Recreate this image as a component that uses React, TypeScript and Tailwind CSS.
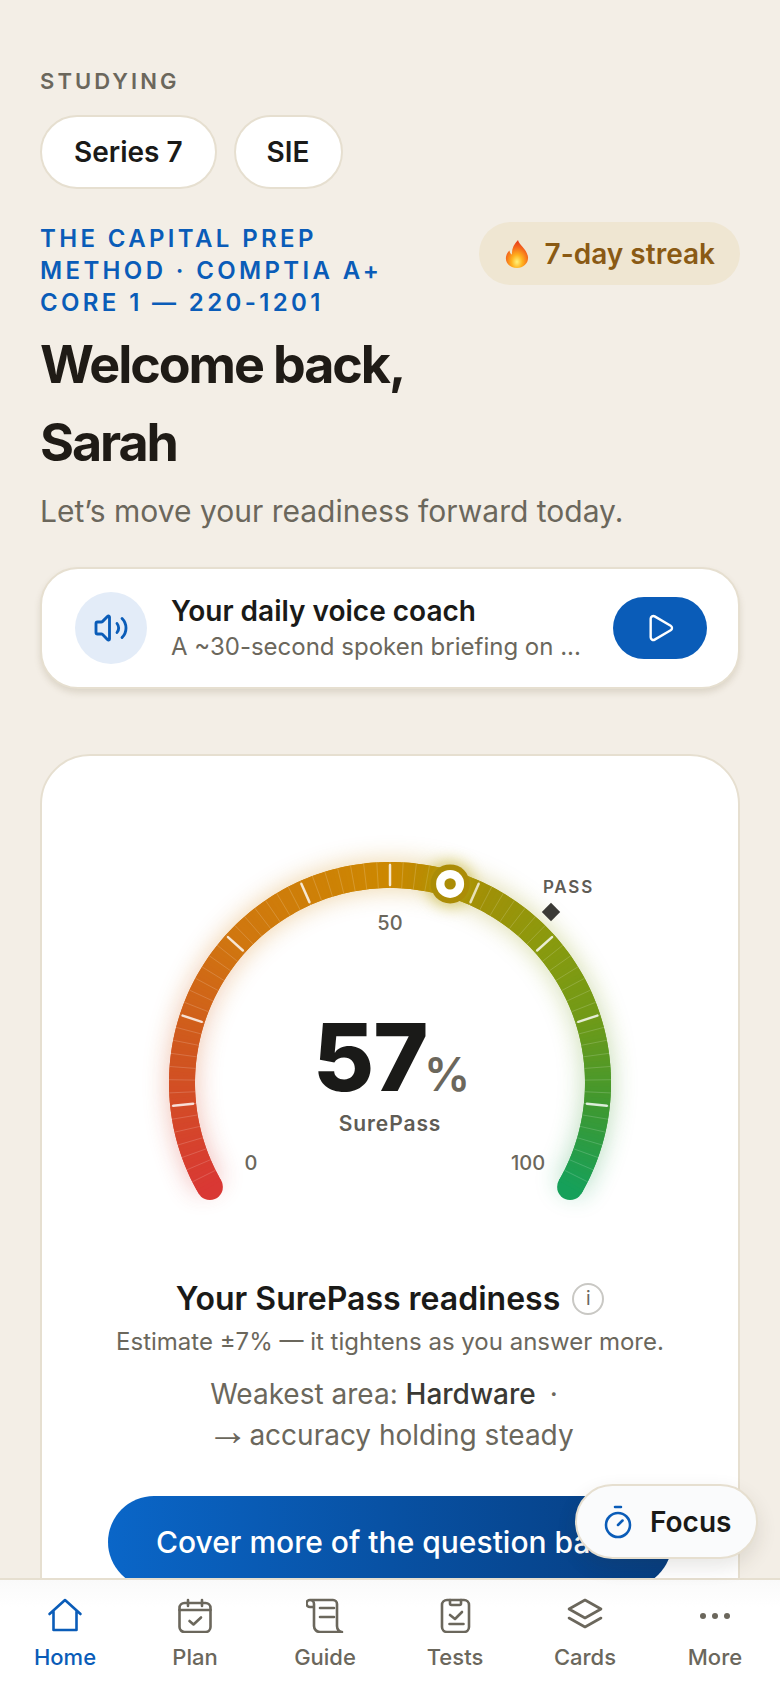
import React from "react";
import { Volume2, Play, Timer } from "lucide-react";

const cx = 390;
const cy = 1084 - 860;
const R = 208;

function pt(deg: number, r: number) {
  const a = (deg * Math.PI) / 180;
  return [cx + r * Math.sin(a), cy - r * Math.cos(a)];
}

const stops: [number, number[]][] = [
  [0, [217, 56, 52]],
  [0.15, [208, 84, 32]],
  [0.3, [208, 118, 16]],
  [0.5, [204, 136, 0]],
  [0.57, [170, 140, 5]],
  [0.7, [138, 154, 14]],
  [0.8, [112, 154, 24]],
  [0.9, [63, 152, 48]],
  [1, [22, 160, 90]],
];

function colorAt(t: number) {
  for (let i = 1; i < stops.length; i++) {
    if (t <= stops[i][0]) {
      const [t0, c0] = stops[i - 1];
      const [t1, c1] = stops[i];
      const k = (t - t0) / (t1 - t0);
      const c = c0.map((v, j) => Math.round(v + (c1[j] - v) * k));
      return `rgb(${c[0]},${c[1]},${c[2]})`;
    }
  }
  return "rgb(22,160,90)";
}

const SEGS = 240;
const segs = Array.from({ length: SEGS }, (_, i) => i);

function Gauge() {
  const arcPath = (from: number, to: number) => {
    const [x0, y0] = pt(from, R);
    const [x1, y1] = pt(to, R);
    return `M${x0} ${y0}A${R} ${R} 0 0 1 ${x1} ${y1}`;
  };
  const [mx, my] = pt(16.8, R);

  return (
    <svg width="696" height="400" viewBox="42 0 696 400" className="block overflow-visible mt-[103px]">
      <defs>
        <filter id="glow" x="-20%" y="-20%" width="140%" height="140%">
          <feGaussianBlur stdDeviation="13" />
        </filter>
        <filter id="knobGlow" x="-100%" y="-100%" width="300%" height="300%">
          <feGaussianBlur stdDeviation="8" />
        </filter>
      </defs>

      <g filter="url(#glow)" opacity="0.36">
        {segs.map((i) => (
          <path
            key={i}
            d={arcPath(-120 + (i * 240) / SEGS, -120 + ((i + 2) * 240) / SEGS)}
            fill="none"
            stroke={colorAt(i / SEGS)}
            strokeWidth="26"
          />
        ))}
      </g>

      <circle cx={pt(-120, R)[0]} cy={pt(-120, R)[1]} r="13" fill={colorAt(0)} />
      <circle cx={pt(120, R)[0]} cy={pt(120, R)[1]} r="13" fill={colorAt(1)} />
      {segs.map((i) => (
        <path
          key={i}
          d={arcPath(-120 + (i * 240) / SEGS, -120 + ((i + (i === SEGS - 1 ? 1 : 2)) * 240) / SEGS)}
          fill="none"
          stroke={colorAt((i + 0.5) / SEGS)}
          strokeWidth="26"
        />
      ))}

      {Array.from({ length: 69 }, (_, i) => i + 1).map((i) => {
        const deg = -120 + (i * 240) / 70;
        const [x0, y0] = pt(deg, R - 13);
        const [x1, y1] = pt(deg, R + 13);
        return <line key={i} x1={x0} y1={y0} x2={x1} y2={y1} stroke="#fff" strokeOpacity="0.17" strokeWidth="1" />;
      })}

      {[-96, -72, -48, -24, 0, 24, 48, 72, 96].map((deg) => {
        const [x0, y0] = pt(deg, R - 10);
        const [x1, y1] = pt(deg, R + 10);
        return (
          <line key={deg} x1={x0} y1={y0} x2={x1} y2={y1} stroke="#fff" strokeOpacity="0.8" strokeWidth="2.5" strokeLinecap="round" />
        );
      })}

      <circle cx={mx} cy={my} r="22" fill="#b9a50a" opacity="0.55" filter="url(#knobGlow)" />
      <circle cx={mx} cy={my} r="19.5" fill="#ab8c06" />
      <circle cx={mx} cy={my} r="14" fill="#fff" />
      <circle cx={mx} cy={my} r="5.7" fill="#ab8c06" />

      <rect x="544.5" y={913 - 860 - 6.5} width="13" height="13" fill="#3b3a36" transform={`rotate(45 551 ${913 - 860})`} />

      <g style={{ fontFamily: "Inter, sans-serif" }}>
        <text x="594" y={894 - 860} textAnchor="end" fontSize="17" fontWeight="600" letterSpacing="1.8" fill="#5f5c55">PASS</text>
        <text x="390" y={931 - 860} textAnchor="middle" fontSize="20" fontWeight="500" fill="#6b675c">50</text>
        <text x="251" y={1171 - 860} textAnchor="middle" fontSize="20" fontWeight="500" fill="#6b675c">0</text>
        <text x="528" y={1171 - 860} textAnchor="middle" fontSize="20" fontWeight="500" fill="#6b675c">100</text>
        <text x="313" y={1092 - 860} fontSize="94" fontWeight="800" letterSpacing="-1" fill="#1a1a18">57</text>
        <text x="424" y={1092 - 860} fontSize="46" fontWeight="600" fill="#6b675c">%</text>
        <text x="390" y={1132 - 860} textAnchor="middle" fontSize="21" fontWeight="600" letterSpacing="0.9" fill="#5f5c55">SurePass</text>
      </g>
    </svg>
  );
}

function HomeIcon() {
  return (
    <svg width="36" height="36" viewBox="0 0 36 36" fill="none" stroke="#0a5cb8" strokeWidth="2.6" strokeLinejoin="round" strokeLinecap="round">
      <path d="M2.500 17 18 3l15.500 14M6.500 14v19h23V14" />
    </svg>
  );
}

function PlanIcon() {
  return (
    <svg width="36" height="36" viewBox="0 0 36 36" fill="none" stroke="#6b675c" strokeWidth="2.6" strokeLinejoin="round" strokeLinecap="round">
      <rect x="2.500" y="6" width="31" height="29" rx="5" />
      <path d="M2.500 13h31M11 3v6M25 3v6" />
      <path d="m12.500 24 4 3.500 7.500-7" />
    </svg>
  );
}

function GuideIcon() {
  return (
    <svg width="38" height="36" viewBox="0 0 38 36" fill="none" stroke="#6b675c" strokeWidth="2.6" strokeLinejoin="round" strokeLinecap="round">
      <path d="M4 3h23a4 4 0 0 1 4 4v22c0 3 2 6 5 6H14a6 6 0 0 1-6-6V7a4 4 0 0 0-4-4 3 3 0 0 0 0 7h3" />
      <path d="M14 11h14M14 20h14" />
    </svg>
  );
}

function TestsIcon() {
  return (
    <svg width="36" height="36" viewBox="0 0 36 36" fill="none" stroke="#6b675c" strokeWidth="2.6" strokeLinejoin="round" strokeLinecap="round">
      <rect x="5" y="3" width="27" height="32" rx="5" />
      <path d="M13 3v3.500A1.500 1.500 0 0 0 14.500 8h8A1.500 1.500 0 0 0 24 6.500V3" />
      <path d="m13 18 5 4 7-7M12.500 27h14" />
    </svg>
  );
}

function CardsIcon() {
  return (
    <svg width="36" height="36" viewBox="0 0 36 36" fill="none" stroke="#6b675c" strokeWidth="2.6" strokeLinejoin="round" strokeLinecap="round">
      <path d="M18 3 34 12 18 21 2 12Z" />
      <path d="M2 21l16 9 16-9" />
    </svg>
  );
}

function MoreIcon() {
  return (
    <svg width="36" height="36" viewBox="0 0 36 36" fill="#6b675c">
      <circle cx="6" cy="19" r="3" />
      <circle cx="18" cy="19" r="3" />
      <circle cx="30" cy="19" r="3" />
    </svg>
  );
}

function Flame() {
  return (
    <svg width="26" height="30" viewBox="0 0 26 30">
      <defs>
        <radialGradient id="flame" cx="50%" cy="78%" r="70%">
          <stop offset="0" stopColor="#fff27a" />
          <stop offset="0.35" stopColor="#ffb21e" />
          <stop offset="0.75" stopColor="#f4661b" />
          <stop offset="1" stopColor="#e8431b" />
        </radialGradient>
      </defs>
      <path d="M14 1c1 5 9 9 10 17 .6 6-4.500 11-11 11S1 24.500 2 18c.4-3 2-5 3.500-6.500.3 2 1 3.500 2.500 4C7.500 10 10 5 14 1Z" fill="url(#flame)" />
    </svg>
  );
}

const navItems = [
  { label: "Home", icon: <HomeIcon />, active: true },
  { label: "Plan", icon: <PlanIcon /> },
  { label: "Guide", icon: <GuideIcon /> },
  { label: "Tests", icon: <TestsIcon /> },
  { label: "Cards", icon: <CardsIcon /> },
  { label: "More", icon: <MoreIcon /> },
];

export default function App() {
  return (
    <div className="relative flex flex-col h-[1688px] w-[780px] overflow-hidden bg-[#f3eee6] font-['Inter',sans-serif]">
      <div className="flex-1 overflow-hidden px-[40px] pt-[67px]">
        <div className="text-[22px] leading-[28px] font-semibold tracking-[0.14em] text-[#6b675c]">STUDYING</div>

        <div className="flex gap-[17px] mt-[20px]">
          <div className="h-[74px] px-[32px] flex items-center rounded-full bg-white border-2 border-[#e6dfd0] text-[28px] font-semibold text-[#1a1a18]">Series 7</div>
          <div className="h-[74px] px-[31px] flex items-center rounded-full bg-white border-2 border-[#e6dfd0] text-[28px] font-semibold text-[#1a1a18]">SIE</div>
        </div>

        <div className="flex items-center justify-between mt-[34px]">
          <div className="w-[360px] text-[24px] leading-[32px] font-semibold tracking-[0.14em] text-[#0a5cb8]">
            THE CAPITAL PREP METHOD · COMPTIA A+ CORE 1 — 220-1201
          </div>
          <div className="flex items-center gap-[15px] h-[63px] px-[25px] -mt-[35px] rounded-full bg-[#efe6d2] text-[28px] font-semibold text-[#8a5a14]">
            <Flame />
            <span>7-day streak</span>
          </div>
        </div>

        <h1 className="mt-[7px] text-[52px] leading-[78px] font-bold tracking-[-0.04em] text-[#1f1b16]">
          Welcome back,
          <br />
          Sarah
        </h1>
        <p className="mt-[9px] text-[30px] leading-[40px] text-[#6b675c]">Let’s move your readiness forward today.</p>

        <div className="flex items-center h-[122px] mt-[36px] pl-[33px] pr-[31px] rounded-[38px] bg-white border-2 border-[#e6dfd0] shadow-[0_4px_6px_rgba(120,105,70,0.18)]">
          <div className="flex items-center justify-center w-[72px] h-[72px] rounded-full bg-[#e3ecf8] shrink-0">
            <Volume2 size={36} strokeWidth={1.9} color="#0a5cb8" />
          </div>
          <div className="flex-1 min-w-0 ml-[24px]">
            <div className="text-[28px] leading-[36px] font-semibold text-[#1a1a18]">Your daily voice coach</div>
            <div className="mt-[2px] text-[24px] leading-[32px] text-[#6b675c] truncate">A ~30-second spoken briefing on ...</div>
          </div>
          <div className="flex items-center justify-center w-[94px] h-[62px] rounded-full bg-[#0a5cb8] shrink-0">
            <Play size={32} strokeWidth={1.8} color="#fff" />
          </div>
        </div>

        <div className="h-[900px] mt-[65px] rounded-[50px] bg-white border-2 border-[#e6dfd0]">
          <Gauge />
          <div className="flex items-center justify-center gap-[12px] mt-[18px]">
            <span className="text-[32px] leading-[44px] font-semibold text-[#1a1a18]">Your SurePass readiness</span>
            <span className="flex items-center justify-center w-[32px] h-[32px] rounded-full border-2 border-[#c9c8c4] text-[19px] text-[#6b675c]">i</span>
          </div>
          <p className="mt-[5px] text-center text-[24px] leading-[32px] text-[#6b675c]">Estimate ±7% — it tightens as you answer more.</p>
          <p className="mt-[16px] text-center text-[28px] leading-[41px] text-[#6b675c]">
            Weakest area: <span className="font-medium text-[#3a3934]">Hardware</span>
            <span className="ml-[14px] mr-[12px]">·</span>
            <br />
            <span className="font-['Liberation_Sans',sans-serif] text-[42px] leading-[0]">→</span>
            <span className="ml-[1px]">accuracy holding steady</span>
          </p>
          <div className="flex items-center h-[92px] mt-[40px] mx-[66px] px-[48px] rounded-full bg-gradient-to-r from-[#0a66c8] to-[#063d80] text-[30px] font-medium text-white whitespace-nowrap overflow-hidden">
            Cover more of the question bank
          </div>
        </div>
      </div>

      <nav className="grid grid-cols-6 h-[110px] shrink-0 bg-gradient-to-b from-[#fafafa] to-white to-[25%] border-t-2 border-[#e6dfd0] relative">
        {navItems.map((n) => (
          <div key={n.label} className="flex flex-col items-center pt-[17px]">
            <div className="h-[36px] flex items-center justify-center">{n.icon}</div>
            <div className={`mt-[10px] text-[22px] leading-[28px] font-medium ${n.active ? "text-[#0a5cb8]" : "text-[#6b675c]"}`}>{n.label}</div>
          </div>
        ))}
      </nav>

      <div className="absolute left-[575px] top-[1484px] flex items-center gap-[14px] w-[183px] h-[75px] pl-[23px] rounded-full bg-[#fafbfc] border-2 border-[#e6dfd0] shadow-[0_8px_20px_rgba(60,50,30,0.12)]">
        <Timer size={36} strokeWidth={1.7} color="#0a5cb8" />
        <span className="text-[28px] font-semibold text-[#1a1a18]">Focus</span>
      </div>
    </div>
  );
}
